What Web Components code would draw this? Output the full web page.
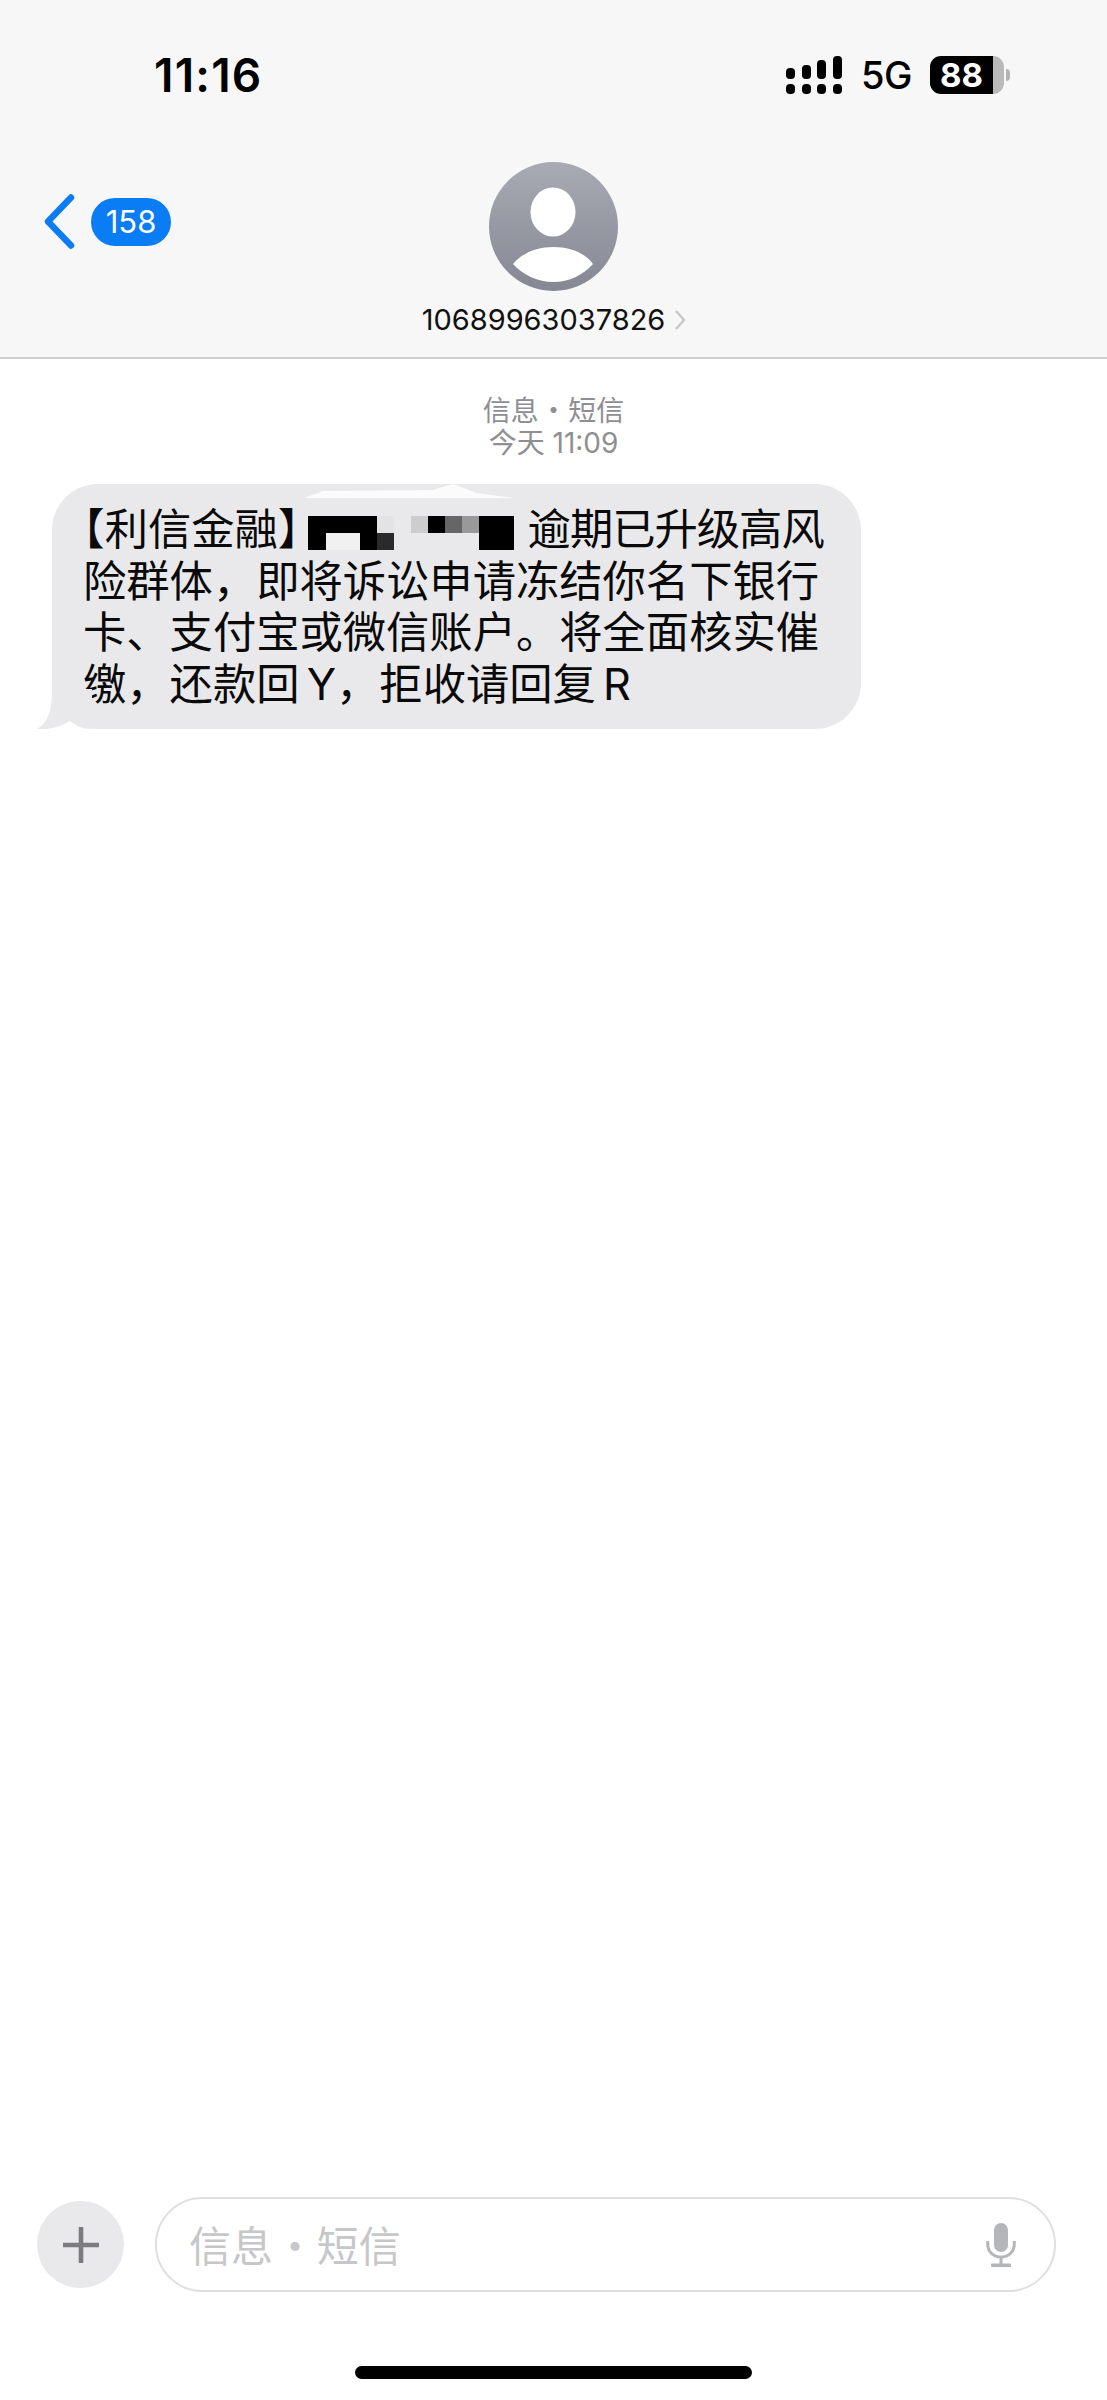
<!DOCTYPE html>
<html lang="zh-CN">
<head>
<meta charset="utf-8">
<title>信息</title>
<style>
  html, body { margin: 0; background: #fff; }
  body { font-family: "Inter", "Noto Sans CJK SC", sans-serif; }
  .half { font-feature-settings: "halt"; }
  .tight { letter-spacing: -1px; }
</style>
</head>
<body>
<message-app>
  <thread-header slot="header" badge="158" number="10689963037826" clock="11:16" battery="88"></thread-header>
  <thread-view slot="thread" kind="信息 • 短信" stamp="今天 11:09">
    <msg-bubble><span class="half">【利信金融】</span><pixel-mask></pixel-mask><span class="tight">逾期已升级高风</span><br>险群体&#xFF0C;即将诉讼申请冻结你名下银行卡、支付宝或微信账户。将全面核实催缴&#xFF0C;还款回 Y&#xFF0C;拒收请回复 R</msg-bubble>
  </thread-view>
  <composer-bar slot="composer" placeholder="信息 • 短信"></composer-bar>
  <home-indicator slot="home"></home-indicator>
</message-app>

<script>
const sans = `"Inter", "Noto Sans CJK SC", sans-serif`;
const cjk = `"Noto Sans CJK SC", sans-serif`;

function shadow(el, html) {
  const template = document.createElement('template');
  template.innerHTML = html;
  el.attachShadow({ mode: 'open' }).appendChild(template.content.cloneNode(true));
}

class MessageApp extends HTMLElement {
  constructor() {
    super();
    shadow(this, `
    <style>
      :host { display: flex; flex-direction: column; width: 1107px; height: 2400px; overflow: hidden; font-family: ${sans}; }
      .thread { display: block; flex: 1; }
    </style>
    <slot name="header"></slot>
    <div class="thread"><slot name="thread"></slot></div>
    <slot name="composer"></slot>
    <slot name="home"></slot>`);
  }
}

class StatusBar extends HTMLElement {
  constructor() {
    super();
    shadow(this, `
    <style>
      :host { display: flex; align-items: center; justify-content: space-between; height: 150px; padding: 0 97px 0 154px; }
      .time { font-size: 46px; font-weight: 600; color: #000; letter-spacing: 1.2px; }
      .right { display: flex; align-items: center; }
      .signal { display: block; margin-top: 0; }
      .net { font-size: 38px; font-weight: 500; color: #000; margin-left: 19px; width: 51px; letter-spacing: -0.5px; }
      .battery { display: flex; align-items: center; margin-left: 18px; }
      .cell { display: flex; align-items: center; justify-content: center; width: 74px; height: 38px; box-sizing: border-box; padding-right: 11px; border-radius: 11px; background: linear-gradient(90deg, #000 85%, #b9b9b9 85%); color: #fff; font-size: 33px; font-weight: 700; }
      .nub { width: 4px; height: 12px; margin-left: 2px; background: #b4b4b4; border-radius: 0 6px 6px 0; }
    </style>
    <span class="time">${this.getAttribute('clock')}</span>
    <div class="right">
      <svg class="signal" width="56" height="38" viewBox="0 0 56 38" fill="#000">
        <rect x="0" y="12" width="9" height="11" rx="4"/>
        <rect x="16" y="9" width="9" height="14" rx="4"/>
        <rect x="31" y="4" width="9" height="19" rx="4"/>
        <rect x="47" y="0" width="9" height="23" rx="4"/>
        <rect x="0" y="28" width="9" height="10" rx="4"/>
        <rect x="16" y="28" width="9" height="10" rx="4"/>
        <rect x="31" y="28" width="9" height="10" rx="4"/>
        <rect x="47" y="28" width="9" height="10" rx="4"/>
      </svg>
      <span class="net">5G</span>
      <div class="battery"><div class="cell">${this.getAttribute('level')}</div><div class="nub"></div></div>
    </div>`);
  }
}

class ContactAvatar extends HTMLElement {
  constructor() {
    super();
    shadow(this, `
    <style>
      :host { display: block; width: 129px; height: 129px; }
      svg { display: block; }
    </style>
    <svg width="129" height="129" viewBox="0 0 129 129">
      <defs>
        <linearGradient id="g" x1="0" y1="0" x2="0" y2="1">
          <stop offset="0" stop-color="#a8abb4"/>
          <stop offset="1" stop-color="#858892"/>
        </linearGradient>
      </defs>
      <circle cx="64.5" cy="64.5" r="64.5" fill="url(#g)"/>
      <ellipse cx="64" cy="50" rx="22.5" ry="24.5" fill="#fff"/>
      <path d="M24 102 C33 91 48 85 64.5 85 C81 85 96 91 104 102 C94 113 80 120 64.5 120 C49 120 34 113 24 102 Z" fill="#fff"/>
    </svg>`);
  }
}

class ThreadHeader extends HTMLElement {
  constructor() {
    super();
    shadow(this, `
    <style>
      :host { display: block; background: #f7f7f7; border-bottom: 2px solid #cfcfcf; height: 357px; }
      .nav { display: grid; grid-template-columns: 1fr auto 1fr; padding-top: 12px; }
      .back { display: flex; align-items: center; gap: 16px; padding: 33px 0 0 43px; height: 53px; }
      .badge { display: flex; align-items: center; justify-content: center; width: 80px; height: 48px; border-radius: 24px; background: #0a7cf4; color: #fff; font-size: 31px; }
      .who { display: flex; flex-direction: column; align-items: center; }
      .number { display: flex; align-items: center; margin-top: 11px; font-size: 29px; color: #111; white-space: nowrap; margin-left: 1px; }
      .number svg { margin-left: 9px; }
    </style>
    <status-bar clock="${this.getAttribute('clock')}" level="${this.getAttribute('battery')}"></status-bar>
    <div class="nav">
      <div class="back">
        <svg width="32" height="55" viewBox="0 0 32 55" fill="none"><path d="M28 3.5 L5 27.5 L28 51.5" stroke="#0a7cf4" stroke-width="6.5" stroke-linecap="round" stroke-linejoin="round"/></svg>
        <span class="badge">${this.getAttribute('badge')}</span>
      </div>
      <div class="who">
        <contact-avatar></contact-avatar>
        <div class="number"><span>${this.getAttribute('number')}</span><svg width="12" height="20" viewBox="0 0 12 20" fill="none"><path d="M2 1 L10 10 L2 19" stroke="#c8c8c8" stroke-width="2.4"/></svg></div>
      </div>
      <div></div>
    </div>`);
  }
}

class ThreadView extends HTMLElement {
  constructor() {
    super();
    shadow(this, `
    <style>
      :host { display: block; padding-top: 34px; }
      .meta { text-align: center; color: #8e8e93; font-size: 28px; line-height: 33.5px; }
      .kind { font-family: ${cjk}; word-spacing: -5.5px; }
      .list { display: flex; flex-direction: column; align-items: flex-start; padding: 24px 0 0 52px; }
    </style>
    <div class="meta"><div class="kind">${this.getAttribute('kind')}</div><div>${this.getAttribute('stamp')}</div></div>
    <div class="list"><slot></slot></div>`);
  }
}

class MsgBubble extends HTMLElement {
  constructor() {
    super();
    shadow(this, `
    <style>
      :host { display: block; position: relative; box-sizing: border-box; width: 809px; height: 245px; padding: 20px 20px 0 31px; background: #e9e9eb; border-radius: 46px; color: #0a0a0a; font-size: 43.3px; line-height: 51.5px; word-spacing: -5px; }
      .tail { position: absolute; left: -15px; bottom: 0; display: block; }
      .smear { position: absolute; left: 252px; top: 0; display: block; }
    </style>
    <svg class="tail" width="55" height="40" viewBox="0 0 55 40"><path d="M15 0 C15 22 11 34 0 40 C13 41 23 38 33 32 C39 37 45 40 55 40 L55 0 Z" fill="#e9e9eb"/></svg>
    <svg class="smear" width="210" height="16" viewBox="0 0 210 16"><path d="M0 14 L19 7 L129 6 L149 0 L173 9 L210 14 Z" fill="#fbfbfb"/></svg>
    <slot></slot>`);
  }
}

class PixelMask extends HTMLElement {
  constructor() {
    super();
    const cells = [
      [0,0,3,1,'#000'],[3,0,1,1,'#000'],[0,1,1,1,'#000'],[1,1,2,1,'#f1f1f2'],[3,1,1,1,'#000'],[4,1,1,1,'#2a2a2a'],[4,0,1,1,'#e3e3e4'],
      [6,0,1,1,'#cdcdcd'],[7,0,1,1,'#000'],[8,0,1,1,'#666'],[9,0,1,1,'#999'],[10,0,2,2,'#000']
    ].map(([x,y,w,h,c]) => `<i style="grid-column:${x+1}/span ${w};grid-row:${y+1}/span ${h};background:${c}"></i>`).join('');
    shadow(this, `
    <style>
      :host { display: inline-block; overflow: hidden; vertical-align: -5px; margin: 0 14px 0 9px; }
      .grid { display: grid; grid-template-columns: repeat(12, 17.1px); grid-template-rows: 17px 17px; }
    </style>
    <div class="grid">${cells}</div>`);
  }
}

class ComposerBar extends HTMLElement {
  constructor() {
    super();
    shadow(this, `
    <style>
      :host { display: flex; align-items: center; gap: 31px; padding: 0 51px 0 37px; }
      .plus { display: flex; align-items: center; justify-content: center; width: 87px; height: 87px; border-radius: 50%; background: #e9e9eb; flex: none; }
      .field { display: flex; align-items: center; justify-content: space-between; flex: 1; box-sizing: border-box; height: 95px; padding: 0 38px 0 32px; border: 2.5px solid #dfdfe0; border-radius: 47.5px; }
      .hint { color: #c7c7c9; font-family: ${cjk}; font-size: 42px; line-height: 50px; word-spacing: -8.5px; padding-bottom: 2px; }
      svg { display: block; }
    </style>
    <div class="plus"><svg width="36" height="36" viewBox="0 0 36 36"><path d="M18 1 V35 M1 18 H35" stroke="#7b7b80" stroke-width="4.6" stroke-linecap="round"/></svg></div>
    <div class="field">
      <span class="hint">${this.getAttribute('placeholder')}</span>
      <svg width="30" height="44" viewBox="0 0 30 44" fill="none">
        <rect x="8" y="0" width="14" height="29" rx="7" fill="#b4b6b9"/>
        <path d="M1.7 18 V21 C1.7 29 7.5 34 15 34 C22.5 34 28.3 29 28.3 21 V18" stroke="#b4b6b9" stroke-width="3"/>
        <path d="M15 34 V41" stroke="#b4b6b9" stroke-width="3"/>
        <rect x="5" y="40.5" width="20" height="3.5" rx="1" fill="#b4b6b9"/>
      </svg>
    </div>`);
  }
}

class HomeIndicator extends HTMLElement {
  constructor() {
    super();
    shadow(this, `
    <style>
      :host { display: flex; justify-content: center; padding: 74px 0 21px; }
      .bar { width: 397px; height: 13px; border-radius: 6.5px; background: #000; }
    </style>
    <div class="bar"></div>`);
  }
}

customElements.define('message-app', MessageApp);
customElements.define('status-bar', StatusBar);
customElements.define('contact-avatar', ContactAvatar);
customElements.define('thread-header', ThreadHeader);
customElements.define('thread-view', ThreadView);
customElements.define('msg-bubble', MsgBubble);
customElements.define('pixel-mask', PixelMask);
customElements.define('composer-bar', ComposerBar);
customElements.define('home-indicator', HomeIndicator);
</script>
</body>
</html>
